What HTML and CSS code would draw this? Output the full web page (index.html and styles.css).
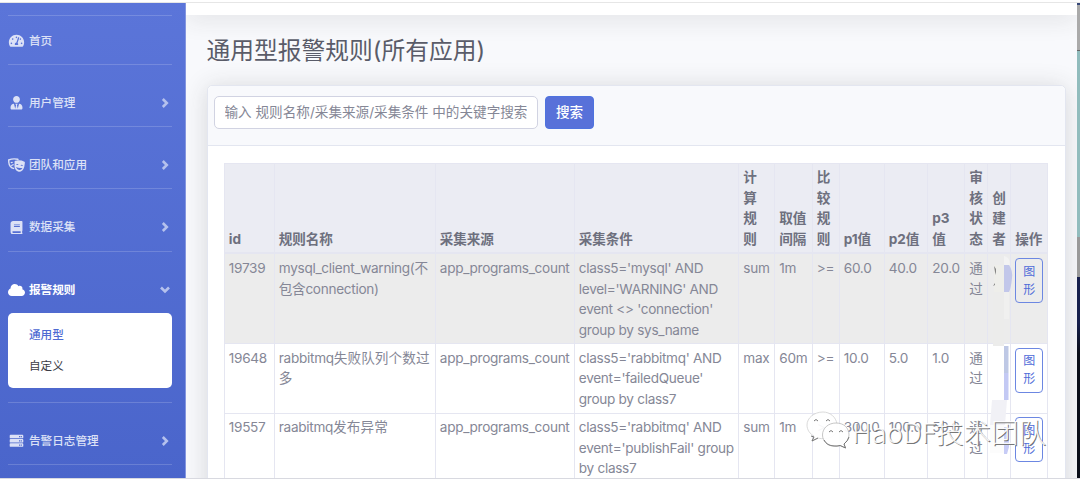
FILE: index.html
```html
<!DOCTYPE html>
<html lang="zh-CN">
<head>
<meta charset="utf-8">
<title>通用型报警规则</title>
<link rel="stylesheet" href="styles.css">
</head>
<body>
<svg class="defs" width="0" height="0">
  <symbol id="right" viewBox="0 0 10 12"><path d="M2.800 2l4 4-4 4" fill="none" stroke="currentColor" stroke-width="2.600"/></symbol>
  <symbol id="down" viewBox="0 0 12 10"><path d="M2 2.500l4 4 4-4" fill="none" stroke="currentColor" stroke-width="2.600"/></symbol>
</svg>
<div class="window">
  <nav class="sidebar">
    <a class="item first"><svg class="icon" viewBox="0 0 576 512"><path d="M288 32C128.94 32 0 160.94 0 320c0 52.8 14.25 102.26 39.06 144.8 5.61 9.62 16.3 15.2 27.44 15.2h443c11.14 0 21.83-5.58 27.44-15.2C561.75 422.26 576 372.8 576 320c0-159.06-128.94-288-288-288zm0 64c14.71 0 26.58 10.13 30.32 23.65-1.11 2.26-2.64 4.23-3.45 6.67l-9.22 27.67c-5.13 3.49-10.97 6.01-17.64 6.01-17.67 0-32-14.33-32-32S270.33 96 288 96zM96 384c-17.67 0-32-14.33-32-32s14.33-32 32-32 32 14.33 32 32-14.33 32-32 32zm48-160c-17.67 0-32-14.33-32-32s14.33-32 32-32 32 14.33 32 32-14.33 32-32 32zm246.77-72.41l-61.33 184C343.13 347.33 352 364.54 352 384c0 11.72-3.38 22.55-8.88 32H232.88c-5.5-9.45-8.88-20.28-8.88-32 0-33.94 26.5-61.43 59.9-63.59l61.34-184.01c4.17-12.56 17.73-19.45 30.36-15.17 12.57 4.19 19.35 17.79 15.17 30.36zm14.66 57.2l15.52-46.55c3.47-1.29 7.13-2.23 11.05-2.23 17.67 0 32 14.33 32 32s-14.33 32-32 32c-11.38-.01-20.89-6.28-26.57-15.22zM480 384c-17.67 0-32-14.33-32-32s14.33-32 32-32 32 14.33 32 32-14.33 32-32 32z"/></svg><span>首页</span></a>
    <a class="item"><svg class="icon" viewBox="0 0 448 512"><path d="M224 256c70.7 0 128-57.3 128-128S294.7 0 224 0 96 57.3 96 128s57.3 128 128 128zm95.8 32.6L272 480l-32-136 32-56h-96l32 56-32 136-47.8-191.4C56.9 292 0 350.3 0 422.4V464c0 26.5 21.5 48 48 48h352c26.5 0 48-21.5 48-48v-41.6c0-72.1-56.9-130.4-128.2-133.8z"/></svg><span>用户管理</span><svg class="arrow"><use href="#right"/></svg></a>
    <a class="item"><svg class="icon wide" viewBox="0 0 17 14"><path d="M6.200 10.600C3 9.900 1 7.200.8 4.200L.7 2Q5 .1 9.800 1.300l.3 1" fill="none" stroke="currentColor" stroke-width="1.400"/><path d="M2.800 4.900q.9-.9 1.900-.4M3.300 8q.8-1.300 2.400-1.400" fill="none" stroke="currentColor" stroke-width="1.100"/><path fill-rule="evenodd" d="M7.300 2.800Q12 1.500 16.500 3.800q.5.3.4.9l-.6 4c-.6 3.200-3.200 5.300-5.300 5.100-2.600-.3-4.600-3.100-4.500-6L6.600 3.500q0-.5.7-.7zM8 6.500q1.400-1.200 2.600.3-1.400.6-2.600-.3zm4.400.7q1.500-1.200 2.700.3-1.400.6-2.700-.3zM8 9q2.900 1.600 6.400.9-1.200 2.300-3.300 2Q8.800 11.600 8 9z"/></svg><span>团队和应用</span><svg class="arrow"><use href="#right"/></svg></a>
    <a class="item"><svg class="icon" viewBox="0 0 448 512"><path d="M448 360V24c0-13.3-10.7-24-24-24H96C43 0 0 43 0 96v320c0 53 43 96 96 96h328c13.300 0 24-10.700 24-24v-16c0-7.500-3.500-14.300-8.900-18.700-4.200-15.400-4.200-59.300 0-74.700 5.400-4.300 8.900-11.100 8.900-18.600zM128 134c0-3.300 2.700-6 6-6h212c3.300 0 6 2.700 6 6v20c0 3.300-2.700 6-6 6H134c-3.300 0-6-2.700-6-6v-20zm0 64c0-3.300 2.700-6 6-6h212c3.300 0 6 2.700 6 6v20c0 3.300-2.700 6-6 6H134c-3.300 0-6-2.700-6-6v-20zm253.400 250H96c-17.700 0-32-14.300-32-32 0-17.600 14.400-32 32-32h285.400c-1.900 17.100-1.900 46.900 0 64z"/></svg><span>数据采集</span><svg class="arrow"><use href="#right"/></svg></a>
    <a class="item active"><svg class="icon wide" viewBox="0 0 640 512"><path d="M537.6 226.6c4.1-10.700 6.400-22.400 6.400-34.600 0-53-43-96-96-96-19.700 0-38.100 6-53.300 16.200C367 64.200 315.300 32 256 32c-88.400 0-160 71.600-160 160 0 2.700.1 5.400.2 8.100C40.200 219.800 0 273.200 0 336c0 79.500 64.500 144 144 144h368c70.700 0 128-57.300 128-128 0-61.900-44-113.600-102.400-125.400z"/></svg><span>报警规则</span><svg class="arrow"><use href="#down"/></svg></a>
    <div class="submenu"><a class="current">通用型</a><a>自定义</a></div>
    <a class="item last"><svg class="icon" viewBox="0 0 16 16"><path fill-rule="evenodd" d="M1 1h14q1 0 1 1v2q0 1-1 1H1Q0 5 0 4V2q0-1 1-1zm0 5h14q1 0 1 1v2q0 1-1 1H1q-1 0-1-1V7q0-1 1-1zm0 5h14q1 0 1 1v2q0 1-1 1H1q-1 0-1-1v-2q0-1 1-1zM11 2.300v1.400h1.300V2.300zm2 0v1.400h1.300V2.300zm-2 5v1.400h1.300V7.300zm2 0v1.400h1.300V7.300zm-2 5v1.400h1.300v-1.400zm2 0v1.400h1.300v-1.400z"/></svg><span>告警日志管理</span><svg class="arrow"><use href="#right"/></svg></a>
  </nav>
  <main class="content">
    <div class="topbar"></div>
    <div class="page">
      <h1>通用型报警规则(所有应用)</h1>
      <section class="card">
        <div class="search"><input type="text" placeholder="输入 规则名称/采集来源/采集条件 中的关键字搜索"><button class="primary">搜索</button></div>
        <div class="body">
          <table>
            <colgroup><col class="c1"><col class="c2"><col class="c3"><col class="c4"><col class="c5"><col class="c6"><col class="c7"><col class="c8"><col class="c9"><col class="c10"><col class="c11"><col class="c12"><col class="c13"></colgroup>
            <thead><tr><th>id</th><th>规则名称</th><th>采集来源</th><th>采集条件</th><th>计<br>算<br>规<br>则</th><th>取值<br>间隔</th><th>比<br>较<br>规<br>则</th><th>p1值</th><th>p2值</th><th>p3<br>值</th><th>审<br>核<br>状<br>态</th><th>创<br>建<br>者</th><th>操作</th></tr></thead>
            <tbody>
              <tr class="hover"><td>19739</td><td>mysql_client_warning(不<br>包含connection)</td><td>app_programs_count</td><td>class5='mysql' AND<br>level='WARNING' AND<br>event &lt;&gt; 'connection'<br>group by sys_name</td><td>sum</td><td>1m</td><td>&gt;=</td><td>60.0</td><td>40.0</td><td>20.0</td><td>通<br>过</td><td></td><td><button class="chart">图<br>形</button></td></tr>
              <tr><td>19648</td><td>rabbitmq<span class="han">失败队列个数过</span><br>多</td><td>app_programs_count</td><td>class5='rabbitmq' AND<br>event='failedQueue'<br>group by class7</td><td>max</td><td>60m</td><td>&gt;=</td><td>10.0</td><td>5.0</td><td>1.0</td><td>通<br>过</td><td></td><td><button class="chart">图<br>形</button></td></tr>
              <tr><td>19557</td><td>raabitmq<span class="han">发布异常</span></td><td>app_programs_count</td><td>class5='rabbitmq' AND<br>event='publishFail' group<br>by class7</td><td>sum</td><td>1m</td><td>&gt;=</td><td>300.0</td><td>100.0</td><td>50.0</td><td>通<br>过</td><td></td><td><button class="chart">图<br>形</button></td></tr>
            </tbody>
          </table>
        </div>
      </section>
    </div>
  </main>
  <div class="desktop"></div>
</div>
<svg class="redaction" width="34" height="220" viewBox="982 250 34 220">
  <path d="M994 265h10v27H994z" fill="#eeeeea"/>
  <path d="M994 266l2 3v6l-1-3zM993 286l2-3v2z" fill="#858585"/>
  <path d="M1004 256q6 1 6 9h-6z" fill="#f3f3f3"/>
  <path d="M1004 265h5q4 6 3 13-1 10-3 14h-5z" fill="#c2c7ea"/>
  <path d="M993 292h11v54H993z" fill="#ececeb"/><path d="M1004 292h5v27h-5z" fill="#f0f0ef"/>
  <path d="M1004 346h4.500v27h-4.500z" fill="#bec8e5"/><path d="M1004 373h4.500v27h-4.500z" fill="#c3c9f4"/>
  <path d="M992 400h15l-2 25h-15z" fill="#f1f1f6"/>
  <path d="M1004 427h5v20l-2 7h-3z" fill="#c7ccf6"/>
  <path d="M990 425h14v28h-14z" fill="#fcfcfc"/>
</svg>
<div class="watermark">
  <svg width="44" height="40" viewBox="0 0 44 40"><g fill="#fff" fill-opacity=".93" stroke-width=".8"><path d="M17 1C8 1 1 7 1 14c0 5 3 9 7 11l-2 5 6-3c2 .7 5 .8 7 .5C29 27 32 21 31 13 30 6 24 1 17 1z" stroke="#d0d0d0"/><path d="M30 12c8 0 13 5 13 12 0 4-3 7-5 9l1.500 4-5-2.500c-2 .7-4 .8-6 .5-7-.5-12-5-12-11 0-7 6-12 13.500-12z" stroke="#b8b8b8"/></g><g fill="none" stroke="#777" stroke-width="1"><path d="M5 25l3 1-2 4 6-3M8 10q2-3 4 0M20 10q2-3 4 0M23 21q2-3 4 0M33 21q2-3 4 0M18 29q3 6 10 6 3 .3 6-.5l5.500 2.500-1.500-4q4-3 5-7"/></g></svg>
  <span>HaoDF技术团队</span>
</div>
</body>
</html>
```

FILE: styles.css
```css
* { box-sizing: border-box; }
body { margin: 0; width: 1080px; height: 479px; overflow: hidden; position: relative; background: #fff; color: #858796; font: 13.6px/20.5px Inter, "Noto Sans CJK SC", sans-serif; }
.defs { position: absolute; }
.window { display: flex; height: 479px; border-style: solid; border-color: transparent; border-width: 3px 0 1px; border-image: linear-gradient(#fff 0 2px, #e6e6e6 2px 3px, #d8d9e0 3px) 3 0 1; }
.sidebar { width: 186px; flex: none; padding: 12px 13px 0 8px; background: linear-gradient(#5b75d9, #4a65cb); border-right: 1px solid #8496df; color: #dce1f6; font-size: 11.6px; line-height: 18px; overflow: hidden; }
.item { display: flex; align-items: center; height: 62.2px; padding-top: 15px; border-bottom: 1px solid rgba(255,255,255,.17); }
.first { height: 50px; padding-top: 2px; border-top: 1px solid rgba(255,255,255,.17); }
.icon { width: 17px; height: 13.6px; margin-right: 4px; fill: currentColor; color: #dce1f6; flex: none; }
.icon.wide { height: 14px; }
.item span { flex: 1; white-space: nowrap; font-weight: 500; }
.arrow { width: 12px; height: 12px; margin-right: 1px; color: #b5c1ed; }
.active { border-bottom: 0; color: #fff; height: 61px; }
.active .icon { color: #fff; }
.active span { font-weight: 700; }
.submenu { height: 75px; background: #fff; border-radius: 5px; padding: 7.500px 21px; }
.submenu a { display: block; line-height: 30.6px; color: #3a3b45; }
.submenu a.current { color: #4e6ad2; font-weight: 500; }
.last { margin-top: 14px; height: 63px; border-top: 1px solid rgba(255,255,255,.17); }
.content { width: 891px; flex: none; background: #f8f9fc; overflow: hidden; }
.topbar { height: 12px; background: #fff; box-shadow: 0 2px 24px rgba(50,50,50,.17); }
.page { padding: 20px 12px 0 20.500px; }
h1 { margin: 0; height: 49.500px; font-size: 23.75px; line-height: 31px; font-weight: 400; color: #5a5c69; white-space: nowrap; }
.card { width: 859px; height: 430px; border: 1px solid #e3e6f0; border-radius: 5px; background: #fff; box-shadow: 0 2px 24px rgba(50,50,50,.17); }
.search { height: 60px; display: flex; gap: 7px; padding: 10px 6px; background: #f8f9fc; border-bottom: 1px solid #e3e6f0; border-radius: 5px 5px 0 0; }
input { width: 324.500px; height: 33px; border: 1px solid #d1d3e2; border-radius: 5px; padding: 0 10px 1px; font: inherit; color: #858796; background: #fff; }
input::placeholder { color: #858796; opacity: 1; }
button { font: inherit; border-radius: 4px; padding: 0; }
.primary { width: 49px; height: 33px; border: 1px solid #4e73df; background: #5871d9; color: #fff; font-weight: 500; }
.body { padding: 17px 16px; }
table { width: 824px; table-layout: fixed; border-collapse: collapse; letter-spacing: -.3px; }
th, td { border: 1px solid #e5e6f1; padding: 3.700px 0 3.200px 4.300px; text-align: left; vertical-align: top; white-space: nowrap; }
th { vertical-align: bottom; background: #ebecf3; color: #6e707e; font-weight: 700; border-bottom-width: 2px; letter-spacing: -.1px; }
.han { letter-spacing: .1px; }
.hover { background: #ececec; }
.c1 { width: 50px } .c2 { width: 161px } .c3 { width: 139px } .c4 { width: 164.5px } .c5 { width: 36px } .c6 { width: 37.500px } .c7 { width: 27px } .c8 { width: 45px } .c9 { width: 43.5px } .c10 { width: 37px } .c11 { width: 23px } .c12 { width: 23px } .c13 { width: 36.500px }
.chart { display: block; width: 28px; height: 45px; border: 1px solid #6c87e2; color: #4e6bd8; background: transparent; font-size: 12px; line-height: 18px; }
.desktop { width: 3px; flex: none; background: linear-gradient(#364878 0 2px, #aaa 2px 47px, #666 47px 48px, #91bcbd 48px 234px, #999 234px 274px, #17204d 274px 320px, #0a0e19 350px); }
.redaction { position: absolute; left: 982px; top: 250px; }
.watermark { position: absolute; left: 806px; top: 411px; display: flex; align-items: center; gap: 2px; color: rgba(255,255,255,.92); font: 300 27.500px/40px "Noto Sans CJK SC", sans-serif; white-space: nowrap; text-shadow: 1px 1px 0 #777; }
```
